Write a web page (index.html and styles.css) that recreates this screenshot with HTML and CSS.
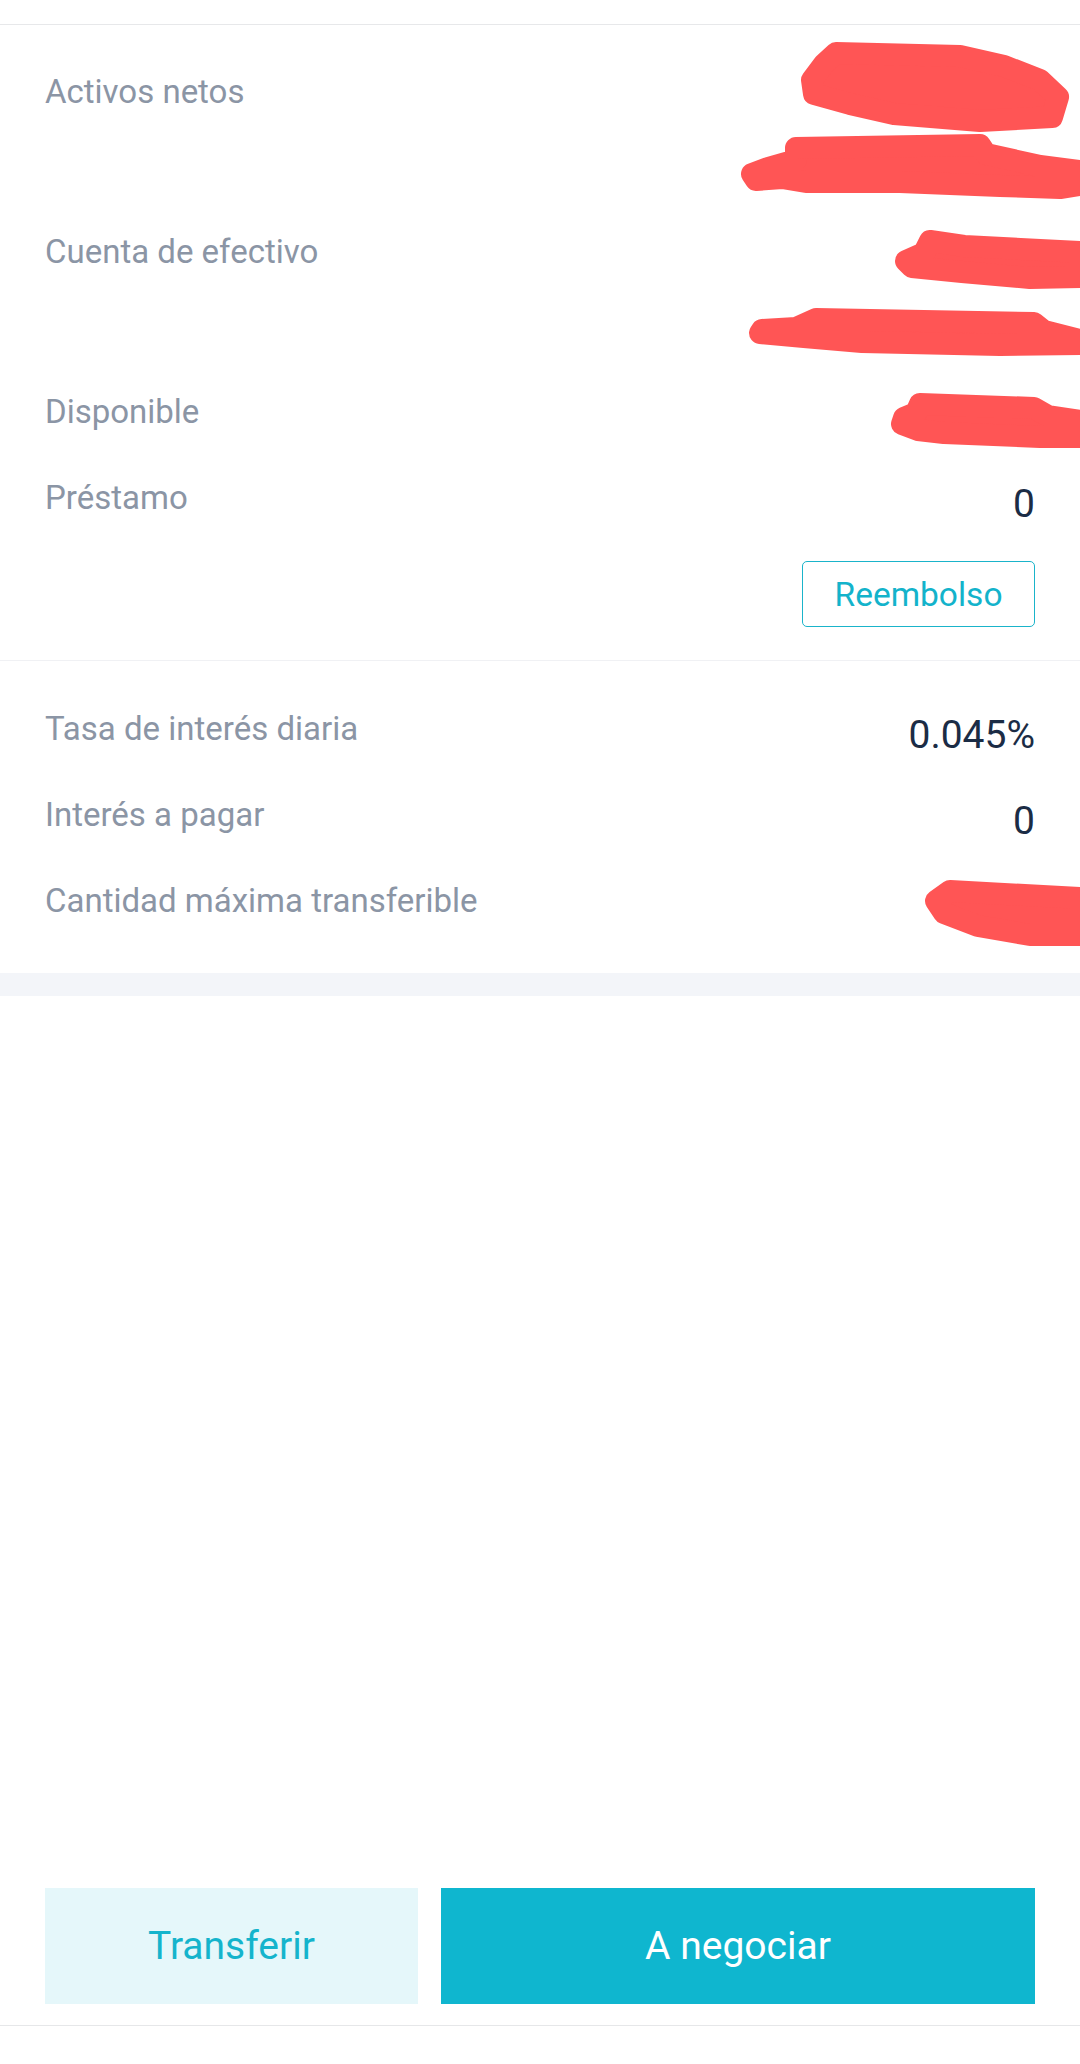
FILE: index.html
```html
<!DOCTYPE html>
<html lang="es">
<head>
  <meta charset="UTF-8" />
  <meta name="viewport" content="width=device-width, initial-scale=1.0"/>
  <title>Cuenta de margen</title>
  <link rel="stylesheet" href="styles.css">
</head>
<body>
  <div class="page">
    <div class="topbar"></div>

    <!-- Resumen de la cuenta -->
    <section class="summary">
      <div class="list">
        <div class="row row-double">
          <span class="label">Activos netos</span>
          <span class="value masked"></span>
        </div>
        <div class="row row-double">
          <span class="label">Cuenta de efectivo</span>
          <span class="value masked"></span>
        </div>
        <div class="row">
          <span class="label">Disponible</span>
          <span class="value masked"></span>
        </div>
        <div class="row">
          <span class="label">Préstamo</span>
          <span class="value">0</span>
        </div>
      </div>
      <div class="actions">
        <button class="btn-outline">Reembolso</button>
      </div>
    </section>

    <!-- Intereses -->
    <section class="details">
      <div class="list">
        <div class="row">
          <span class="label">Tasa de interés diaria</span>
          <span class="value">0.045%</span>
        </div>
        <div class="row">
          <span class="label">Interés a pagar</span>
          <span class="value">0</span>
        </div>
        <div class="row">
          <span class="label">Cantidad máxima transferible</span>
          <span class="value masked"></span>
        </div>
      </div>
    </section>
    <div class="band"></div>

    <div class="filler"></div>

    <div class="footer">
      <button class="btn btn-light">Transferir</button>
      <button class="btn btn-primary">A negociar</button>
    </div>
    <div class="bottom"></div>

    <!-- marcas de tachado sobre los importes -->
    <svg class="redactions" width="1080" height="960" viewBox="0 0 1080 960" fill="#ff5555" stroke="#ff5555" stroke-width="22" stroke-linejoin="round">
      <path d="M836 53 L960 56 L1004 66 L1040 80 L1058 97 L1052 117 L980 121 L894 114 L850 104 L814 94 L812 80 L824 64 Z"/>
      <path d="M796 148 L980 145 L986 154 L1040 166 L1080 171 L1080 185 L1060 188 L1000 186 L900 182 L806 182 L782 178 L756 180 L752 174 L768 168 L796 160 Z"/>
      <path d="M930 241 L964 246 L1080 252 L1080 277 L1030 278 L962 272 L912 267 L906 261 L924 253 Z"/>
      <path d="M816 319 L1034 323 L1044 331 L1080 340 L1080 344 L1000 345 L862 342 L804 337 L760 333 L762 330 L796 328 Z"/>
      <path d="M920 404 L1034 408 L1048 416 L1080 421 L1080 437 L1040 437 L944 433 L918 430 L902 424 L904 418 L916 413 Z"/>
      <path d="M950 891 L1080 898 L1080 935 L1030 935 L978 926 L944 913 L936 901 Z"/>
    </svg>
  </div>
</body>
</html>
```

FILE: styles.css
```css
* {
  box-sizing: border-box;
  margin: 0;
  padding: 0;
  font-family: 'Roboto', 'Noto Sans', sans-serif;
}

body {
  background: #fff;
  width: 1080px;
}

.page {
  position: relative;
  min-height: 100vh;
  display: flex;
  flex-direction: column;
}

.topbar {
  height: 25px;
  border-bottom: 1px solid #e7e8ea;
}

.summary {
  padding: 47px 45px 33px;
}

.details {
  padding: 48px 45px 40px;
  border-top: 1px solid #f0f1f4;
}

.list {
  display: flex;
  flex-direction: column;
  gap: 34px;
}

.row {
  display: flex;
  justify-content: space-between;
  align-items: flex-start;
  min-height: 52px;
}

.row-double {
  min-height: 126px;
}

.label {
  font-size: 33px;
  line-height: 40px;
  color: #8b95a5;
}

.value {
  font-size: 39px;
  line-height: 52px;
  color: #1b2c45;
}

.actions {
  display: flex;
  justify-content: flex-end;
  margin-top: 31px;
}

button {
  font: inherit;
  border: none;
  cursor: pointer;
}

.btn-outline {
  width: 233px;
  height: 66px;
  background: #fff;
  border: 1.5px solid #1ab4ca;
  border-radius: 5px;
  color: #13b3cb;
  font-size: 33.5px;
}

.band {
  height: 23px;
  background: #f3f5f9;
}

.filler {
  flex: 1;
}

.footer {
  display: flex;
  gap: 23px;
  padding: 0 45px 21px;
  border-bottom: 1px solid #e6e7e9;
}

.btn {
  height: 116px;
  font-size: 39px;
}

.btn-light {
  flex: 0 0 373px;
  background: #e5f7fa;
  color: #14b4cc;
}

.btn-primary {
  flex: 1;
  background: #0fb6cf;
  color: #fff;
}

.bottom {
  height: 38px;
}

.redactions {
  position: absolute;
  top: 0;
  left: 0;
  pointer-events: none;
}
```
